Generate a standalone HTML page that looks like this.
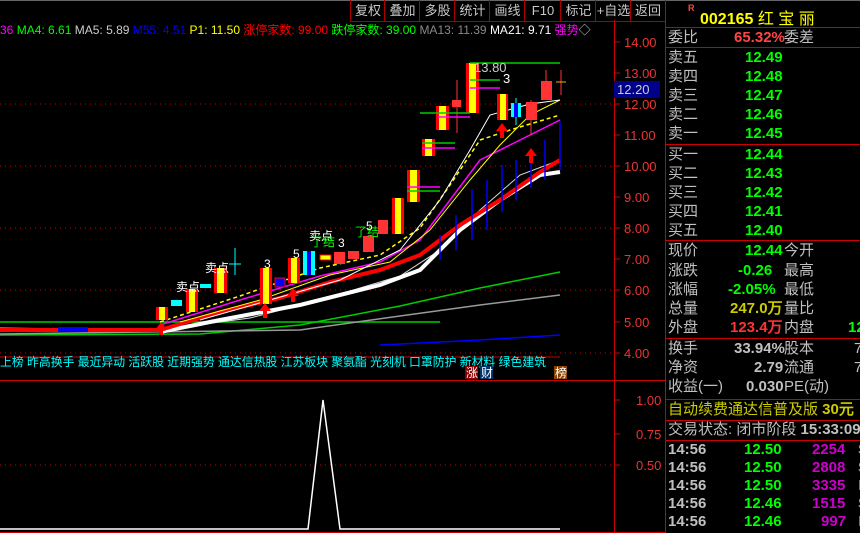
<!DOCTYPE html>
<html><head><meta charset="utf-8"><style>
body{margin:0;width:860px;height:533px;background:#000;overflow:hidden;position:relative;font-family:"Liberation Sans","WenQuanYi Zen Hei",sans-serif;}
.t{position:absolute;white-space:nowrap;}
.btn{position:absolute;top:0;height:21px;line-height:21px;color:#c8c8c8;font-size:13px;text-align:center;border-left:1px solid #a00;}
.rp{position:absolute;left:668px;font-size:15px;color:#c0c0c0;white-space:nowrap;line-height:18px;}
.g{color:#0f0}
</style></head><body>
<svg width="860" height="533" style="position:absolute;left:0;top:0">
<line x1="0" y1="0.5" x2="860" y2="0.5" stroke="#666"/>
<line x1="614.5" y1="20" x2="614.5" y2="533" stroke="#c00"/>
<line x1="665.5" y1="0" x2="665.5" y2="533" stroke="#c00"/>
<line x1="0" y1="380.5" x2="665" y2="380.5" stroke="#c00"/>
<line x1="0" y1="532.5" x2="665" y2="532.5" stroke="#c00"/>
<line x1="350" y1="21.5" x2="665" y2="21.5" stroke="#a00"/>
<g stroke="#c00" stroke-dasharray="1 4">
<line x1="0" y1="104" x2="614" y2="104"/><line x1="0" y1="166" x2="614" y2="166"/><line x1="0" y1="228" x2="614" y2="228"/><line x1="0" y1="290" x2="614" y2="290"/><line x1="0" y1="353" x2="614" y2="353"/><line x1="0" y1="465" x2="614" y2="465"/>
</g>
<g stroke="#c00"><line x1="614" y1="42" x2="620" y2="42"/><line x1="614" y1="73" x2="620" y2="73"/><line x1="614" y1="104" x2="620" y2="104"/><line x1="614" y1="135" x2="620" y2="135"/><line x1="614" y1="166" x2="620" y2="166"/><line x1="614" y1="197" x2="620" y2="197"/><line x1="614" y1="228" x2="620" y2="228"/><line x1="614" y1="259" x2="620" y2="259"/><line x1="614" y1="290" x2="620" y2="290"/><line x1="614" y1="322" x2="620" y2="322"/><line x1="614" y1="353" x2="620" y2="353"/><line x1="614" y1="400" x2="620" y2="400"/><line x1="614" y1="434" x2="620" y2="434"/><line x1="614" y1="465" x2="620" y2="465"/></g>
<g fill="#e33" font-size="13" font-family="Liberation Sans">
<text x="624" y="47">14.00</text><text x="624" y="78">13.00</text><text x="624" y="109">12.00</text><text x="624" y="140">11.00</text><text x="624" y="171">10.00</text><text x="624" y="202">9.00</text><text x="624" y="233">8.00</text><text x="624" y="264">7.00</text><text x="624" y="295">6.00</text><text x="624" y="327">5.00</text><text x="624" y="358">4.00</text>
<text x="636" y="405">1.00</text><text x="636" y="439">0.75</text><text x="636" y="470">0.50</text>
</g>
<rect x="614" y="81" width="46" height="17" fill="#00008a"/>
<text x="617" y="94" fill="#ccc" font-size="13">12.20</text>
<polyline points="380,345 420,343 480,340 560,335" fill="none" stroke="#00f" stroke-width="1.5"/>
<polyline points="0,322 440,322" stroke="#0c0" stroke-width="1.5"/>
<polyline points="0,335 200,334 300,325 400,306 480,288 560,272" fill="none" stroke="#0c0" stroke-width="1.5"/>
<polyline points="0,334 300,330 400,316 480,305 560,295" fill="none" stroke="#999" stroke-width="1.5"/>
<polyline points="0,328 160,330 250,318 320,300 400,276 440,250 480,210 520,175 560,160" fill="none" stroke="#ddd" stroke-width="1"/>
<polyline points="160,332 220,320 300,305 380,285 420,270 460,230 500,200 540,175 560,172" fill="none" stroke="#fff" stroke-width="4"/>
<polyline points="0,330 160,330 220,312 280,298 330,282 380,270 420,255 460,225 500,200 540,172 560,160" fill="none" stroke="#f00" stroke-width="4"/>
<polyline points="160,325 240,300 320,276 380,262 420,240 450,200 480,160 510,145 560,120" fill="none" stroke="#f0f" stroke-width="1.5"/>
<polyline points="160,322 240,296 320,268 380,255 420,228 450,185 480,140 510,130 560,115" fill="none" stroke="#ff0" stroke-width="1.5" stroke-dasharray="4 3"/>
<polyline points="180,322 260,300 330,275 390,262 430,230 470,180 500,145 530,115 560,100" fill="none" stroke="#ff0" stroke-width="1"/>
<polyline points="200,320 270,300 340,280 400,250 440,200 470,150 490,115 530,104 560,100" fill="none" stroke="#fff" stroke-width="1"/>
<g stroke="#00f" stroke-width="1.5"><line x1="440" y1="260" x2="440" y2="235"/><line x1="456" y1="250" x2="456" y2="215"/><line x1="472" y1="240" x2="472" y2="190"/><line x1="487" y1="230" x2="487" y2="180"/><line x1="502" y1="212" x2="502" y2="165"/><line x1="516" y1="200" x2="516" y2="160"/><line x1="531" y1="188" x2="531" y2="150"/><line x1="545" y1="180" x2="545" y2="140"/><line x1="560" y1="170" x2="560" y2="122"/></g>
<rect x="58" y="327" width="30" height="5" fill="#00f"/>
<g>
<rect x="156" y="307" width="12" height="13" fill="#f00"/><rect x="159" y="307" width="6" height="13" fill="#ff0"/>
<rect x="171" y="300" width="11" height="6" fill="#0ff"/>
<rect x="186" y="289" width="12" height="23" fill="#f00"/><rect x="189" y="289" width="6" height="23" fill="#ff0"/>
<rect x="200" y="284" width="11" height="4" fill="#0ff"/>
<rect x="214" y="268" width="13" height="25" fill="#f00"/><rect x="217" y="268" width="7" height="25" fill="#ff0"/>
<line x1="235" y1="248" x2="235" y2="275" stroke="#0ff"/><line x1="229" y1="264" x2="241" y2="264" stroke="#0ff"/>
<rect x="260" y="268" width="12" height="36" fill="#f00"/><rect x="263" y="268" width="6" height="36" fill="#ff0"/>
<rect x="275" y="278" width="10" height="9" fill="#00f" stroke="#f00"/>
<rect x="288" y="258" width="12" height="25" fill="#f00"/><rect x="291" y="258" width="6" height="25" fill="#ff0"/>
<rect x="303" y="251" width="12" height="24" fill="#0ff"/><rect x="307" y="251" width="4" height="24" fill="#00f"/>
<rect x="320" y="255" width="11" height="5" fill="#ff0" stroke="#f00"/>
<rect x="334" y="252" width="11" height="12" fill="#f33"/>
<rect x="348" y="251" width="11" height="8" fill="#f33"/>
<rect x="363" y="236" width="11" height="16" fill="#f33"/>
<rect x="378" y="220" width="10" height="14" fill="#f33"/>
<rect x="392" y="198" width="12" height="36" fill="#f00"/><rect x="395" y="198" width="6" height="36" fill="#ff0"/>
<rect x="407" y="170" width="13" height="32" fill="#f00"/><rect x="410" y="170" width="7" height="32" fill="#ff0"/>
<rect x="422" y="139" width="13" height="17" fill="#f00"/><rect x="425" y="139" width="7" height="17" fill="#ff0"/>
<rect x="436" y="106" width="13" height="24" fill="#f00"/><rect x="439" y="106" width="7" height="24" fill="#ff0"/>
<line x1="457" y1="80" x2="457" y2="133" stroke="#f33"/><rect x="452" y="100" width="9" height="7" fill="#f33"/>
<rect x="466" y="63" width="13" height="50" fill="#f00"/><rect x="469" y="63" width="7" height="50" fill="#ff0"/>
<rect x="497" y="94" width="11" height="26" fill="#f00"/><rect x="500" y="94" width="6" height="26" fill="#ff0"/>
<line x1="516" y1="98" x2="516" y2="125" stroke="#0ff"/><rect x="511" y="103" width="10" height="14" fill="#0ff"/><rect x="514" y="103" width="4" height="14" fill="#00f"/>
<line x1="531" y1="100" x2="531" y2="135" stroke="#f33"/><rect x="526" y="102" width="11" height="18" fill="#f33"/>
<line x1="546" y1="70" x2="546" y2="100" stroke="#f33"/><rect x="541" y="81" width="11" height="19" fill="#f33"/>
<line x1="561" y1="70" x2="561" y2="95" stroke="#f33"/><line x1="556" y1="82" x2="566" y2="82" stroke="#fa0"/>
</g>
<g stroke-width="1.5">
<line x1="420" y1="113" x2="470" y2="113" stroke="#0c0"/><line x1="438" y1="117" x2="470" y2="117" stroke="#f0f"/>
<line x1="422" y1="143" x2="455" y2="143" stroke="#0c0"/><line x1="422" y1="148" x2="455" y2="148" stroke="#f0f"/>
<line x1="407" y1="187" x2="440" y2="187" stroke="#f0f"/><line x1="407" y1="191" x2="440" y2="191" stroke="#0c0"/>
<line x1="470" y1="63" x2="560" y2="63" stroke="#0c0"/><line x1="470" y1="80" x2="500" y2="80" stroke="#0c0"/><line x1="470" y1="88" x2="500" y2="88" stroke="#f0f"/>
</g>
<g fill="#f00">
<polygon points="502,123 496,131 500,131 500,138 504,138 504,131 508,131"/>
<polygon points="531,148 525,156 529,156 529,163 533,163 533,156 537,156"/>
<polygon points="161,322 155,330 159,330 159,335 163,335 163,330 167,330"/>
<polygon points="265,303 259,311 263,311 263,318 267,318 267,311 271,311"/>
<polygon points="293,288 287,296 291,296 291,302 295,302 295,296 299,296"/>
</g>
<g font-size="12" font-family="Liberation Sans,WenQuanYi Zen Hei,sans-serif">
<text x="176" y="291" fill="#fff">卖点</text><text x="205" y="272" fill="#fff">卖点</text><text x="309" y="240" fill="#fff">卖点</text>
<text x="355" y="236" fill="#0f0">了结</text><text x="311" y="246" fill="#0f0">了结</text>
<text x="474" y="72" fill="#ccc" font-size="13">13.80</text><text x="503" y="83" fill="#fff" font-size="13">3</text>
<text x="338" y="247" fill="#fff">3</text><text x="366" y="230" fill="#fff">5</text><text x="264" y="268" fill="#fff">3</text><text x="293" y="258" fill="#fff">5</text>
</g>
<line x1="0" y1="357" x2="560" y2="357" stroke="#c00"/>
<text x="0" y="366" fill="#0ff" font-size="12" textLength="546" lengthAdjust="spacingAndGlyphs" font-family="WenQuanYi Zen Hei,sans-serif">上榜 昨高换手 最近异动 活跃股 近期强势 通达信热股 江苏板块 聚氨酯 光刻机 口罩防护 新材料 绿色建筑</text>
<rect x="465" y="366" width="13" height="13" fill="#800"/><text x="466" y="377" fill="#fff" font-size="12" font-family="WenQuanYi Zen Hei">涨</text>
<rect x="480" y="366" width="13" height="13" fill="#036"/><text x="481" y="377" fill="#fff" font-size="12" font-family="WenQuanYi Zen Hei">财</text>
<rect x="554" y="366" width="13" height="13" fill="#840"/><text x="555" y="377" fill="#fff" font-size="12" font-family="WenQuanYi Zen Hei">榜</text>
<polyline points="0,529 308,529 323,400 340,529 560,529" fill="none" stroke="#fff" stroke-width="1.5"/>
<g stroke="#c00"><line x1="665" y1="27.5" x2="860" y2="27.5"/><line x1="665" y1="47.5" x2="860" y2="47.5"/><line x1="665" y1="144.5" x2="860" y2="144.5"/><line x1="665" y1="240.5" x2="860" y2="240.5"/><line x1="665" y1="338.5" x2="860" y2="338.5"/><line x1="665" y1="399.5" x2="860" y2="399.5"/><line x1="665" y1="420.5" x2="860" y2="420.5"/><line x1="665" y1="440.5" x2="860" y2="440.5"/></g>
</svg>

<div class="t" style="left:0;top:22px;font-size:12px;line-height:16px;font-family:'Liberation Sans','WenQuanYi Zen Hei',sans-serif">
<span style="color:#f0f">36</span> <span class="g">MA4: 6.61</span> <span style="color:#ccc">MA5: 5.89</span> <span style="color:#00f">M55: 4.51</span> <span style="color:#ff0">P1: 11.50</span> <span style="color:#f00">涨停家数: 99.00</span> <span class="g">跌停家数: 39.00</span> <span style="color:#888">MA13: 11.39</span> <span style="color:#fff">MA21: 9.71</span> <span style="color:#f0f">强势</span><span style="color:#ccc">◇</span></div>
<div class="btn" style="left:350px;width:34px">复权</div><div class="btn" style="left:384px;width:35px">叠加</div><div class="btn" style="left:419px;width:35px">多股</div><div class="btn" style="left:454px;width:35px">统计</div><div class="btn" style="left:489px;width:35px">画线</div><div class="btn" style="left:524px;width:36px">F10</div><div class="btn" style="left:560px;width:35px">标记</div><div class="btn" style="left:595px;width:35px">+自选</div><div class="btn" style="left:630px;width:34px">返回</div>

<div class="t" style="left:688px;top:3px;color:#f44;font-size:9px;font-weight:bold">R</div>
<div class="t" style="left:700px;top:5px;color:#ff0;font-size:16px;font-weight:bold">002165 <span style="font-weight:normal">红 宝 丽</span></div>
<div class="rp" style="top:29px">委比<span style="position:absolute;left:66px;color:#f44;font-weight:bold">65.32%</span><span style="position:absolute;left:116px">委差</span></div>
<div class="rp" style="top:49px">卖五<span class="g" style="position:absolute;left:77px;font-weight:bold">12.49</span></div>
<div class="rp" style="top:68px">卖四<span class="g" style="position:absolute;left:77px;font-weight:bold">12.48</span></div>
<div class="rp" style="top:87px">卖三<span class="g" style="position:absolute;left:77px;font-weight:bold">12.47</span></div>
<div class="rp" style="top:106px">卖二<span class="g" style="position:absolute;left:77px;font-weight:bold">12.46</span></div>
<div class="rp" style="top:125px">卖一<span class="g" style="position:absolute;left:77px;font-weight:bold">12.45</span></div>
<div class="rp" style="top:146px">买一<span class="g" style="position:absolute;left:77px;font-weight:bold">12.44</span></div>
<div class="rp" style="top:165px">买二<span class="g" style="position:absolute;left:77px;font-weight:bold">12.43</span></div>
<div class="rp" style="top:184px">买三<span class="g" style="position:absolute;left:77px;font-weight:bold">12.42</span></div>
<div class="rp" style="top:203px">买四<span class="g" style="position:absolute;left:77px;font-weight:bold">12.41</span></div>
<div class="rp" style="top:222px">买五<span class="g" style="position:absolute;left:77px;font-weight:bold">12.40</span></div>
<div class="rp" style="top:242px">现价<span class="g" style="position:absolute;left:77px;font-weight:bold">12.44</span><span style="position:absolute;left:116px">今开</span></div>
<div class="rp" style="top:262px">涨跌<span class="g" style="position:absolute;left:70px;font-weight:bold">-0.26</span><span style="position:absolute;left:116px">最高</span></div>
<div class="rp" style="top:281px">涨幅<span class="g" style="position:absolute;left:60px;font-weight:bold">-2.05%</span><span style="position:absolute;left:116px">最低</span></div>
<div class="rp" style="top:300px">总量<span style="position:absolute;left:62px;color:#cc0;font-weight:bold">247.0万</span><span style="position:absolute;left:116px">量比</span></div>
<div class="rp" style="top:319px">外盘<span style="position:absolute;left:62px;color:#f33;font-weight:bold">123.4万</span><span style="position:absolute;left:116px">内盘</span><span class="g" style="position:absolute;left:180px;font-weight:bold">12</span></div>
<div class="rp" style="top:340px">换手<span style="position:absolute;left:66px;font-weight:bold">33.94%</span><span style="position:absolute;left:116px">股本</span><span style="position:absolute;left:186px">7</span></div>
<div class="rp" style="top:359px">净资<span style="position:absolute;left:86px;font-weight:bold">2.79</span><span style="position:absolute;left:116px">流通</span><span style="position:absolute;left:186px">7</span></div>
<div class="rp" style="top:378px">收益(一)<span style="position:absolute;left:78px;font-weight:bold">0.030</span><span style="position:absolute;left:116px">PE(动)</span></div>
<div class="rp" style="top:401px;color:#cc0">自动续费通达信普及版 <b>30元</b></div>
<div class="rp" style="top:421px">交易状态: 闭市阶段 <b>15:33:09</b></div>
<div class="rp" style="top:441px;font-weight:bold">14:56<span class="g" style="position:absolute;left:76px">12.50</span><span style="position:absolute;left:144px;color:#c0c">2254</span><span class="g" style="position:absolute;left:190px">S</span></div>
<div class="rp" style="top:459px;font-weight:bold">14:56<span class="g" style="position:absolute;left:76px">12.50</span><span style="position:absolute;left:144px;color:#c0c">2808</span><span class="g" style="position:absolute;left:190px">S</span></div>
<div class="rp" style="top:477px;font-weight:bold">14:56<span class="g" style="position:absolute;left:76px">12.50</span><span style="position:absolute;left:144px;color:#c0c">3335</span><span style="position:absolute;left:190px;color:#f33">B</span></div>
<div class="rp" style="top:495px;font-weight:bold">14:56<span class="g" style="position:absolute;left:76px">12.46</span><span style="position:absolute;left:144px;color:#c0c">1515</span><span class="g" style="position:absolute;left:190px">S</span></div>
<div class="rp" style="top:513px;font-weight:bold">14:56<span class="g" style="position:absolute;left:76px">12.46</span><span style="position:absolute;left:153px;color:#c0c">997</span><span style="position:absolute;left:190px;color:#f33">B</span></div>
</body></html>
